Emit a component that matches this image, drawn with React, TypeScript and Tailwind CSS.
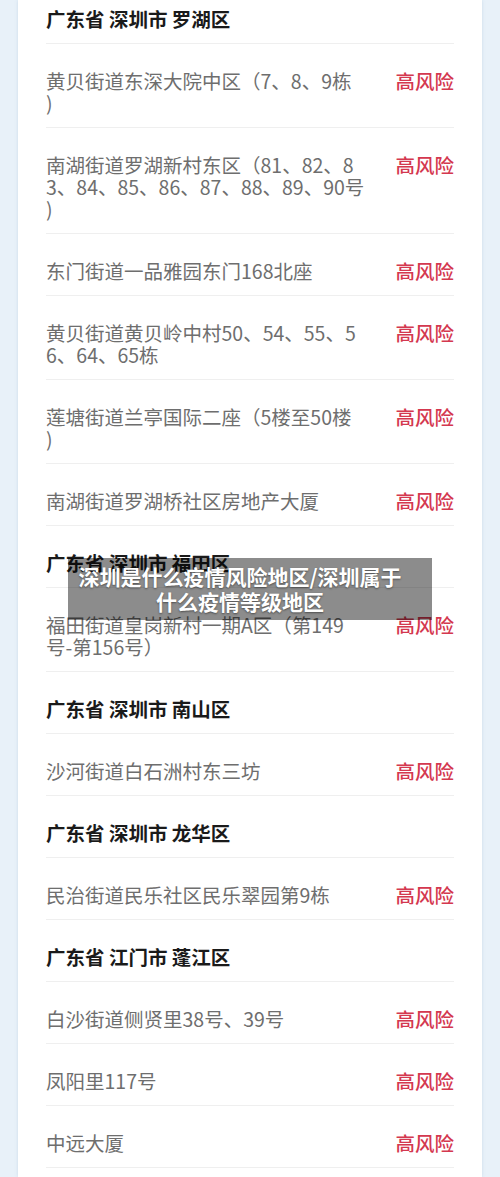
import React from 'react';

type Row =
  | { kind: 'header'; title: string }
  | { kind: 'item'; lines: string[] };

const rows: Row[] = [
  { kind: 'header', title: '广东省 深圳市 罗湖区' },
  { kind: 'item', lines: ['黄贝街道东深大院中区（7、8、9栋', ')'] },
  { kind: 'item', lines: ['南湖街道罗湖新村东区（81、82、8', '3、84、85、86、87、88、89、90号', ')'] },
  { kind: 'item', lines: ['东门街道一品雅园东门168北座'] },
  { kind: 'item', lines: ['黄贝街道黄贝岭中村50、54、55、5', '6、64、65栋'] },
  { kind: 'item', lines: ['莲塘街道兰亭国际二座（5楼至50楼', ')'] },
  { kind: 'item', lines: ['南湖街道罗湖桥社区房地产大厦'] },
  { kind: 'header', title: '广东省 深圳市 福田区' },
  { kind: 'item', lines: ['福田街道皇岗新村一期A区（第149', '号-第156号）'] },
  { kind: 'header', title: '广东省 深圳市 南山区' },
  { kind: 'item', lines: ['沙河街道白石洲村东三坊'] },
  { kind: 'header', title: '广东省 深圳市 龙华区' },
  { kind: 'item', lines: ['民治街道民乐社区民乐翠园第9栋'] },
  { kind: 'header', title: '广东省 江门市 蓬江区' },
  { kind: 'item', lines: ['白沙街道侧贤里38号、39号'] },
  { kind: 'item', lines: ['凤阳里117号'] },
  { kind: 'item', lines: ['中远大厦'] },
];

export default function App() {
  return (
    <div
      className="relative h-[1177px] w-[500px] overflow-hidden bg-[#e8f1f9]"
      style={{ fontFamily: '"Noto Sans CJK SC", "Noto Sans", sans-serif' }}
    >
      <div className="mx-[18px] h-full bg-white px-7 shadow-[0_0_3px_rgba(150,180,210,0.35)]">
        {rows.map((row, i) =>
          row.kind === 'header' ? (
            <div
              key={i}
              className={`border-b border-[#efefef] pb-[13px] ${i === 0 ? 'pt-2' : 'pt-[26px]'}`}
            >
              <div className="text-[19.5px] font-bold leading-[22px] text-[#1a1a1a]">{row.title}</div>
            </div>
          ) : (
            <div key={i} className="flex items-start justify-between border-b border-[#efefef] pb-[13px] pt-[26px]">
              <div className="text-[19.5px] leading-[22px] text-[#6e6e6e]">
                {row.lines.map((line, j) => (
                  <div key={j} className="whitespace-nowrap">
                    {line}
                  </div>
                ))}
              </div>
              <div className="shrink-0 text-[19.5px] font-medium leading-[22px] text-[#d4384f]">高风险</div>
            </div>
          )
        )}
      </div>

      <div className="absolute inset-0 flex items-center justify-center">
        <div className="w-[364px] bg-black/45 py-[6px] pl-1 pr-6 text-center text-[21px] font-bold leading-[25px] text-white [text-shadow:0_1px_2px_rgba(0,0,0,0.45)]">
          深圳是什么疫情风险地区/深圳属于什么疫情等级地区
        </div>
      </div>
    </div>
  );
}
